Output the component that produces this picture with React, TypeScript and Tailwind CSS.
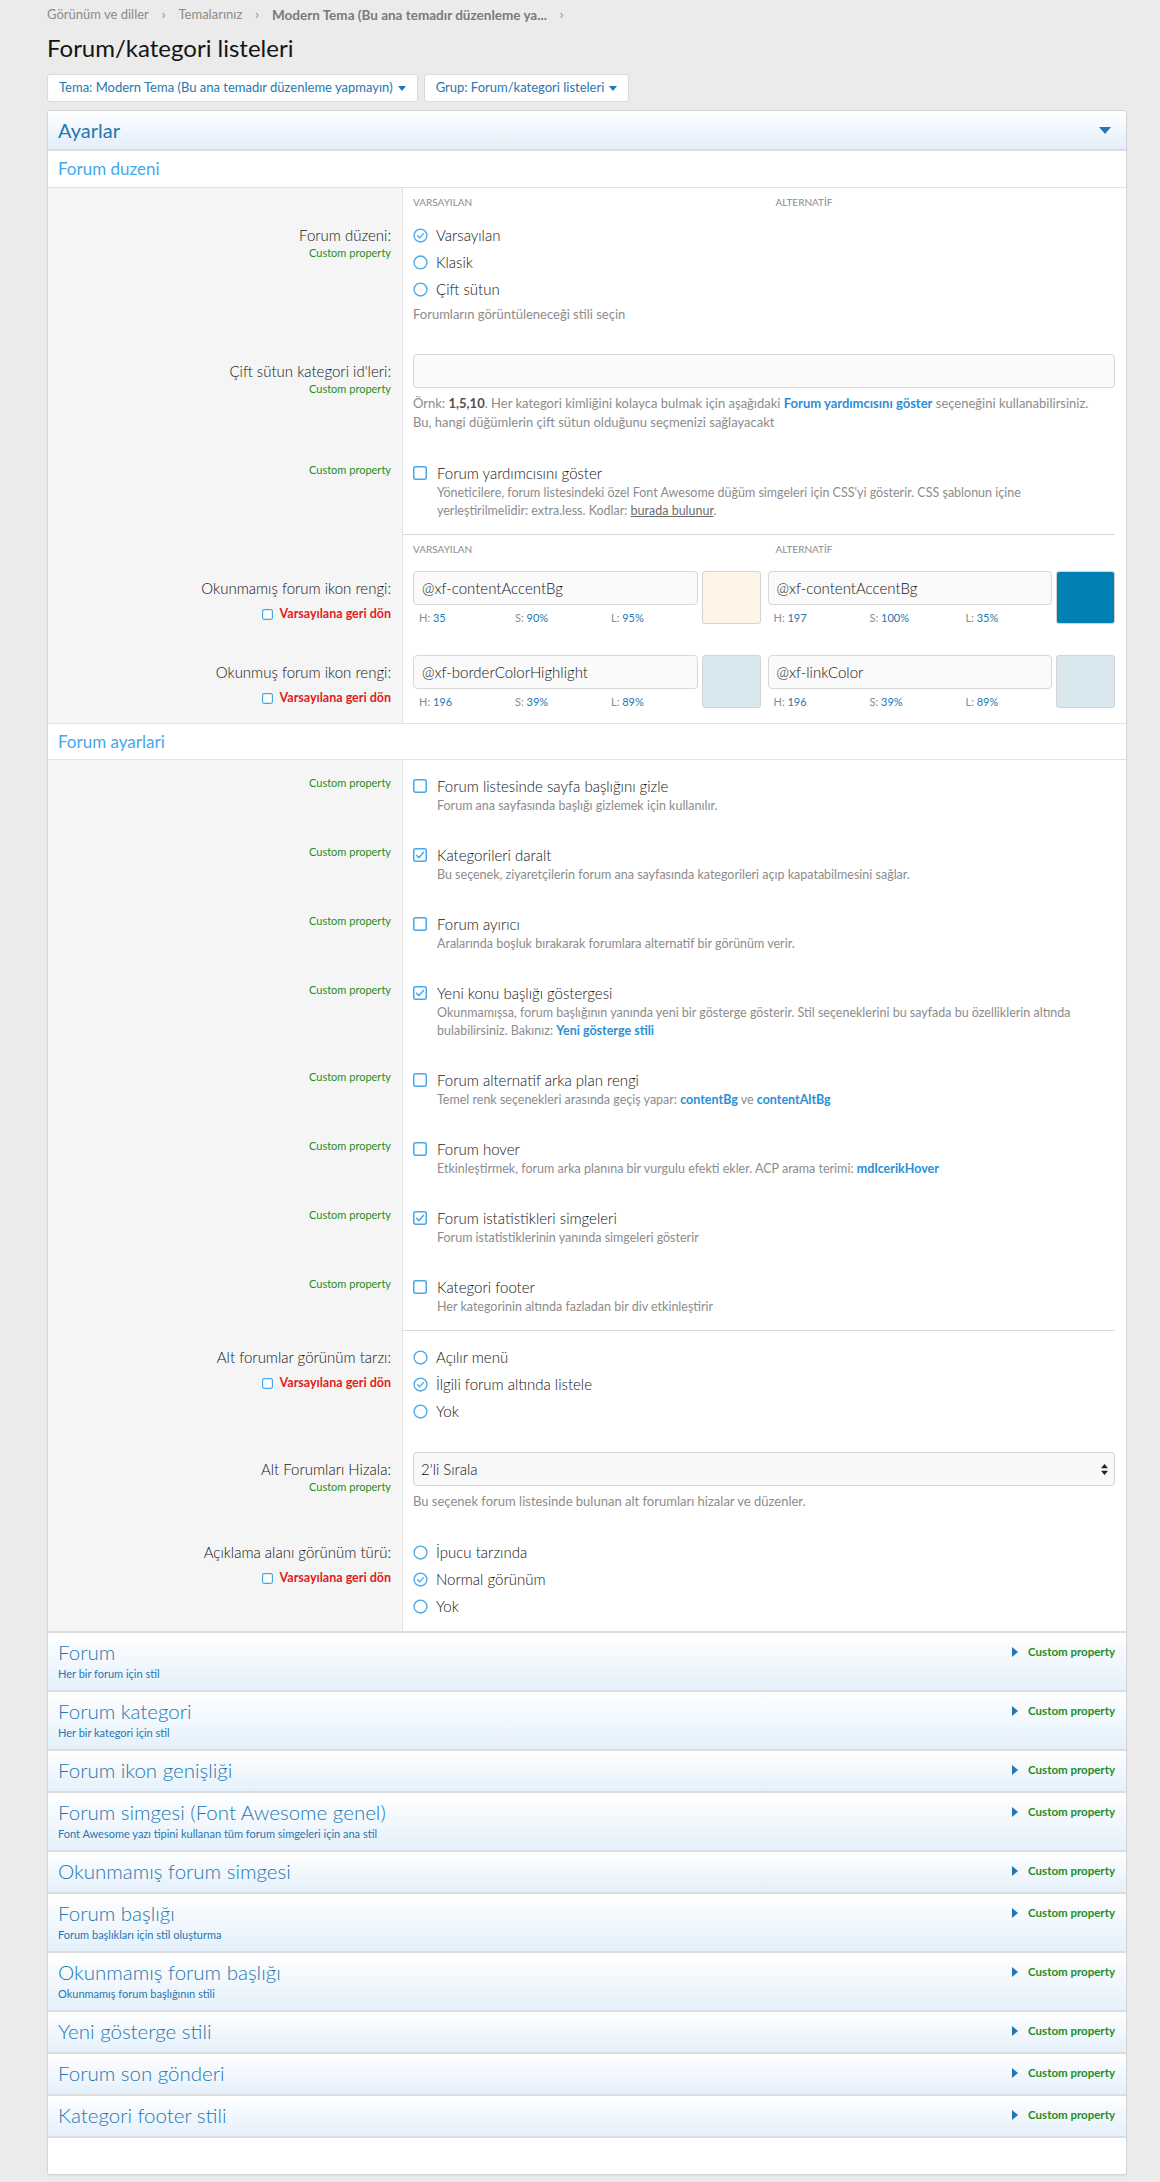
import React from 'react';

const blue = 'text-[#2577b1]';
const main = 'text-[15px] font-light text-[#141414]';

function Radio({ checked }: { checked?: boolean }) {
  return (
    <svg width="15" height="15" viewBox="0 0 16 16" className="shrink-0">
      <circle cx="8" cy="8" r="6.9" fill="white" stroke="#47a7eb" strokeWidth="1.4" />
      {checked && (
        <path d="M5 8.3l2.1 2.2 4-4.5" fill="none" stroke="#47a7eb" strokeWidth="1.4" strokeLinecap="round" strokeLinejoin="round" />
      )}
    </svg>
  );
}

function Box({ checked, size = 14 }: { checked?: boolean; size?: number }) {
  return (
    <svg width={size} height={size} viewBox="0 0 14 14" className="shrink-0">
      <rect x="0.75" y="0.75" width="12.5" height="12.5" rx="2" fill="white" stroke="#47a7eb" strokeWidth="1.5" />
      {checked && (
        <path d="M3.6 7.3l2.2 2.4 4.6-5.3" fill="none" stroke="#47a7eb" strokeWidth="1.5" strokeLinecap="round" strokeLinejoin="round" />
      )}
    </svg>
  );
}

function Caret() {
  return (
    <svg width="8" height="5" viewBox="0 0 8 5" className="ml-[5px] inline-block">
      <path d="M0 0h8L4 5z" fill="#2577b1" />
    </svg>
  );
}

function CustomProp() {
  return <div className="text-[11px] leading-[14px] text-[#1f8d1f]">Custom property</div>;
}

function Revert() {
  return (
    <div className="flex items-center justify-end gap-[7px] mt-[7px]">
      <Box size={11} />
      <span className="text-[12.5px] leading-[16px] font-bold text-[#e21b1b]">Varsayılana geri dön</span>
    </div>
  );
}

function Row({
  left,
  children,
  leftPad = 'pt-[15px]',
  pad = 'pt-[15px] pb-[15px]',
}: {
  left: React.ReactNode;
  children: React.ReactNode;
  leftPad?: string;
  pad?: string;
}) {
  return (
    <div className="grid grid-cols-[354px_1fr]">
      <div className={`bg-[#f5f5f5] text-right pr-[11px] ${leftPad}`}>{left}</div>
      <div className={`border-l border-[#e3e3e3] bg-white pl-[10px] pr-[11px] ${pad}`}>{children}</div>
    </div>
  );
}

function Label({ text }: { text: string }) {
  return <div className={`${main} leading-[22px]`}>{text}</div>;
}

function ColHeader() {
  return (
    <div className="grid grid-cols-[354px_1fr]">
      <div className="bg-[#f5f5f5]" />
      <div className="border-l border-[#e3e3e3] bg-white pt-[7px] pl-[10px] pr-[11px]">
        <div className="grid grid-cols-2 gap-[7px] text-[10px] leading-[14px] uppercase text-[#8c8c8c]">
          <div>VARSAYILAN</div>
          <div className="pl-[8px]">ALTERNATİF</div>
        </div>
      </div>
    </div>
  );
}

function Divider() {
  return (
    <div className="grid grid-cols-[354px_1fr]">
      <div className="bg-[#f5f5f5]" />
      <div className="border-l border-[#e3e3e3] bg-white pr-[11px]">
        <div className="h-px bg-[#d8d8d8]" />
      </div>
    </div>
  );
}

function RadioList({ items, checked, desc }: { items: string[]; checked: number; desc?: string }) {
  return (
    <div>
      <div className="flex flex-col gap-[5px]">
        {items.map((t, i) => (
          <div key={t} className="flex items-center gap-[8px] h-[22px]">
            <Radio checked={i === checked} />
            <span className={main}>{t}</span>
          </div>
        ))}
      </div>
      {desc && <div className="mt-[5px] text-[13px] leading-[19px] text-[#8c8c8c]">{desc}</div>}
    </div>
  );
}

function CheckItem({ title, checked, children }: { title: string; checked?: boolean; children: React.ReactNode }) {
  return (
    <div className="flex items-start gap-[10px]">
      <div className="pt-[4px]">
        <Box checked={checked} />
      </div>
      <div>
        <div className={`${main} leading-[22px]`}>{title}</div>
        <div className="text-[12.5px] leading-[18px] text-[#8c8c8c]">{children}</div>
      </div>
    </div>
  );
}

function ColorField({ value, h, s, l, swatch }: { value: string; h: string; s: string; l: string; swatch: string }) {
  return (
    <div className="flex gap-[4px]">
      <div className="flex-1">
        <div className={`h-[34px] rounded-[4px] border border-[#d8d8d8] bg-[#fafafa] px-[8px] leading-[32px] ${main}`}>
          {value}
        </div>
        <div className="mt-[6px] grid grid-cols-[96px_96px_1fr] px-[6px] text-[11px] leading-[14px] text-[#8c8c8c]">
          <div>H: <span className={blue}>{h}</span></div>
          <div>S: <span className={blue}>{s}</span></div>
          <div>L: <span className={blue}>{l}</span></div>
        </div>
      </div>
      <div className={`w-[59px] h-[53px] rounded-[3px] border border-[#d3d3d3] ${swatch}`} />
    </div>
  );
}

function Link({ children }: { children: React.ReactNode }) {
  return <span className="font-bold text-[#2b8fd6]">{children}</span>;
}

function Collapsed({ title, desc }: { title: string; desc?: string }) {
  return (
    <div className="border-t-2 border-[#dddddd] bg-gradient-to-b from-white to-[#e4f0fb] pl-[10px] pr-[11px] pt-[6px] pb-[8px] flex justify-between">
      <div>
        <div className="text-[20.5px] leading-[26px] font-light text-[#2577b1]">{title}</div>
        {desc && <div className="text-[11px] leading-[17px] text-[#2577b1]">{desc}</div>}
      </div>
      <div className="flex items-center gap-[10px] h-[26px]">
        <svg width="6" height="10" viewBox="0 0 6 10">
          <path d="M0 0l6 5-6 5z" fill="#2577b1" />
        </svg>
        <span className="text-[11.5px] font-bold text-[#1f8d1f]">Custom property</span>
      </div>
    </div>
  );
}

const btn = `h-[28px] rounded-[3px] border border-[#dadada] bg-white px-[11px] text-[13px] ${blue} flex items-center`;

const checkPad = 'pt-[15px] pb-[14px]';

export default function App() {
  return (
    <div className="min-h-[2182px] bg-[#ebebeb] pl-[47px] pr-[33px] pt-[5px] pb-[5px] font-['Lato','Segoe_UI',sans-serif]">
      <div className="flex items-center gap-[13px] h-[20px] text-[13px] text-[#8c8c8c]">
        <span>Görünüm ve diller</span>
        <span>›</span>
        <span>Temalarınız</span>
        <span>›</span>
        <span className="font-bold text-[#7a7a7a] text-[13.5px]">Modern Tema (Bu ana temadır düzenleme ya...</span>
        <span>›</span>
      </div>
      <h1 className="mt-[8px] text-[24px] leading-[30px] text-[#141414]">Forum/kategori listeleri</h1>
      <div className="mt-[11px] flex gap-[6px]">
        <button className={btn}>
          Tema: Modern Tema (Bu ana temadır düzenleme yapmayın)
          <Caret />
        </button>
        <button className={btn}>
          Grup: Forum/kategori listeleri
          <Caret />
        </button>
      </div>

      <div className="mt-[8px] rounded-[3px] border border-[#d6d6d6] bg-white shadow-[0_1px_2px_rgba(0,0,0,0.06)] overflow-hidden">
        <div className="h-[40px] border-b-2 border-[#dddddd] bg-gradient-to-b from-white to-[#e1eefa] pl-[10px] pr-[15px] flex items-center justify-between">
          <span className={`text-[20px] ${blue}`}>Ayarlar</span>
          <svg width="12" height="7" viewBox="0 0 12 7">
            <path d="M0 0h12L6 7z" fill="#2577b1" />
          </svg>
        </div>
        <div className="h-[37px] border-b border-[#e2e2e2] pl-[10px] flex items-center text-[17px] text-[#47a7eb]">Forum duzeni</div>

        <ColHeader />
        <Row left={<><Label text="Forum düzeni:" /><CustomProp /></>}>
          <RadioList items={['Varsayılan', 'Klasik', 'Çift sütun']} checked={0} desc="Forumların görüntüleneceği stili seçin" />
        </Row>
        <Row leftPad="pt-[21px]" left={<><Label text="Çift sütun kategori id'leri:" /><CustomProp /></>}>
          <div className="h-[34px] rounded-[4px] border border-[#d8d8d8] bg-[#fafafa]" />
          <div className="mt-[6px] text-[13px] leading-[19px] text-[#8c8c8c]">
            Örnk: <b className="text-[#505050]">1,5,10</b>. Her kategori kimliğini kolayca bulmak için aşağıdaki <Link>Forum yardımcısını göster</Link> seçeneğini kullanabilirsiniz.
            <br />
            Bu, hangi düğümlerin çift sütun olduğunu seçmenizi sağlayacakt
          </div>
        </Row>
        <Row leftPad="pt-[16px]" pad={checkPad} left={<CustomProp />}>
          <CheckItem title="Forum yardımcısını göster">
            Yöneticilere, forum listesindeki özel Font Awesome düğüm simgeleri için CSS'yi gösterir. CSS şablonun içine
            <br />
            yerleştirilmelidir: extra.less. Kodlar: <span className="underline text-[#6e6e6e]">burada bulunur</span>.
          </CheckItem>
        </Row>
        <Divider />
        <ColHeader />
        <Row leftPad="pt-[21px]" left={<><Label text="Okunmamış forum ikon rengi:" /><Revert /></>}>
          <div className="grid grid-cols-2 gap-[7px]">
            <ColorField value="@xf-contentAccentBg" h="35" s="90%" l="95%" swatch="bg-[#fef4e7]" />
            <ColorField value="@xf-contentAccentBg" h="197" s="100%" l="35%" swatch="bg-[#0080b3]" />
          </div>
        </Row>
        <Row leftPad="pt-[21px]" pad={checkPad} left={<><Label text="Okunmuş forum ikon rengi:" /><Revert /></>}>
          <div className="grid grid-cols-2 gap-[7px]">
            <ColorField value="@xf-borderColorHighlight" h="196" s="39%" l="89%" swatch="bg-[#d8e8ee]" />
            <ColorField value="@xf-linkColor" h="196" s="39%" l="89%" swatch="bg-[#d8e8ee]" />
          </div>
        </Row>

        <div className="h-[37px] border-y border-[#e2e2e2] pl-[10px] flex items-center text-[17px] text-[#47a7eb]">Forum ayarlari</div>

        <Row leftPad="pt-[16px]" pad={checkPad} left={<CustomProp />}>
          <CheckItem title="Forum listesinde sayfa başlığını gizle">Forum ana sayfasında başlığı gizlemek için kullanılır.</CheckItem>
        </Row>
        <Row leftPad="pt-[16px]" pad={checkPad} left={<CustomProp />}>
          <CheckItem title="Kategorileri daralt" checked>
            Bu seçenek, ziyaretçilerin forum ana sayfasında kategorileri açıp kapatabilmesini sağlar.
          </CheckItem>
        </Row>
        <Row leftPad="pt-[16px]" pad={checkPad} left={<CustomProp />}>
          <CheckItem title="Forum ayırıcı">Aralarında boşluk bırakarak forumlara alternatif bir görünüm verir.</CheckItem>
        </Row>
        <Row leftPad="pt-[16px]" pad={checkPad} left={<CustomProp />}>
          <CheckItem title="Yeni konu başlığı göstergesi" checked>
            Okunmamışsa, forum başlığının yanında yeni bir gösterge gösterir. Stil seçeneklerini bu sayfada bu özelliklerin altında
            <br />
            bulabilirsiniz. Bakınız: <Link>Yeni gösterge stili</Link>
          </CheckItem>
        </Row>
        <Row leftPad="pt-[16px]" pad={checkPad} left={<CustomProp />}>
          <CheckItem title="Forum alternatif arka plan rengi">
            Temel renk seçenekleri arasında geçiş yapar: <Link>contentBg</Link> ve <Link>contentAltBg</Link>
          </CheckItem>
        </Row>
        <Row leftPad="pt-[16px]" pad={checkPad} left={<CustomProp />}>
          <CheckItem title="Forum hover">
            Etkinleştirmek, forum arka planına bir vurgulu efekti ekler. ACP arama terimi: <Link>mdIcerikHover</Link>
          </CheckItem>
        </Row>
        <Row leftPad="pt-[16px]" pad={checkPad} left={<CustomProp />}>
          <CheckItem title="Forum istatistikleri simgeleri" checked>
            Forum istatistiklerinin yanında simgeleri gösterir
          </CheckItem>
        </Row>
        <Row leftPad="pt-[16px]" pad={checkPad} left={<CustomProp />}>
          <CheckItem title="Kategori footer">Her kategorinin altında fazladan bir div etkinleştirir</CheckItem>
        </Row>
        <Divider />
        <Row left={<><Label text="Alt forumlar görünüm tarzı:" /><Revert /></>}>
          <RadioList items={['Açılır menü', 'İlgili forum altında listele', 'Yok']} checked={1} />
        </Row>
        <Row leftPad="pt-[21px]" left={<><Label text="Alt Forumları Hizala:" /><CustomProp /></>}>
          <div className="h-[34px] rounded-[4px] border border-[#d4d4d4] bg-[#f8f8f8] pl-[7px] pr-[6px] flex items-center justify-between">
            <span className={main}>2'li Sırala</span>
            <svg width="7" height="11" viewBox="0 0 7 11">
              <path d="M3.5 0L7 4.3H0zM3.5 11L0 6.7h7z" fill="#222" />
            </svg>
          </div>
          <div className="mt-[6px] text-[13px] leading-[19px] text-[#8c8c8c]">
            Bu seçenek forum listesinde bulunan alt forumları hizalar ve düzenler.
          </div>
        </Row>
        <Row pad="pt-[15px] pb-[14px]" left={<><Label text="Açıklama alanı görünüm türü:" /><Revert /></>}>
          <RadioList items={['İpucu tarzında', 'Normal görünüm', 'Yok']} checked={1} />
        </Row>

        <Collapsed title="Forum" desc="Her bir forum için stil" />
        <Collapsed title="Forum kategori" desc="Her bir kategori için stil" />
        <Collapsed title="Forum ikon genişliği" />
        <Collapsed title="Forum simgesi (Font Awesome genel)" desc="Font Awesome yazı tipini kullanan tüm forum simgeleri için ana stil" />
        <Collapsed title="Okunmamış forum simgesi" />
        <Collapsed title="Forum başlığı" desc="Forum başlıkları için stil oluşturma" />
        <Collapsed title="Okunmamış forum başlığı" desc="Okunmamış forum başlığının stili" />
        <Collapsed title="Yeni gösterge stili" />
        <Collapsed title="Forum son gönderi" />
        <Collapsed title="Kategori footer stili" />
        <div className="h-[38px] border-t-2 border-[#dddddd] bg-white" />
      </div>
    </div>
  );
}
